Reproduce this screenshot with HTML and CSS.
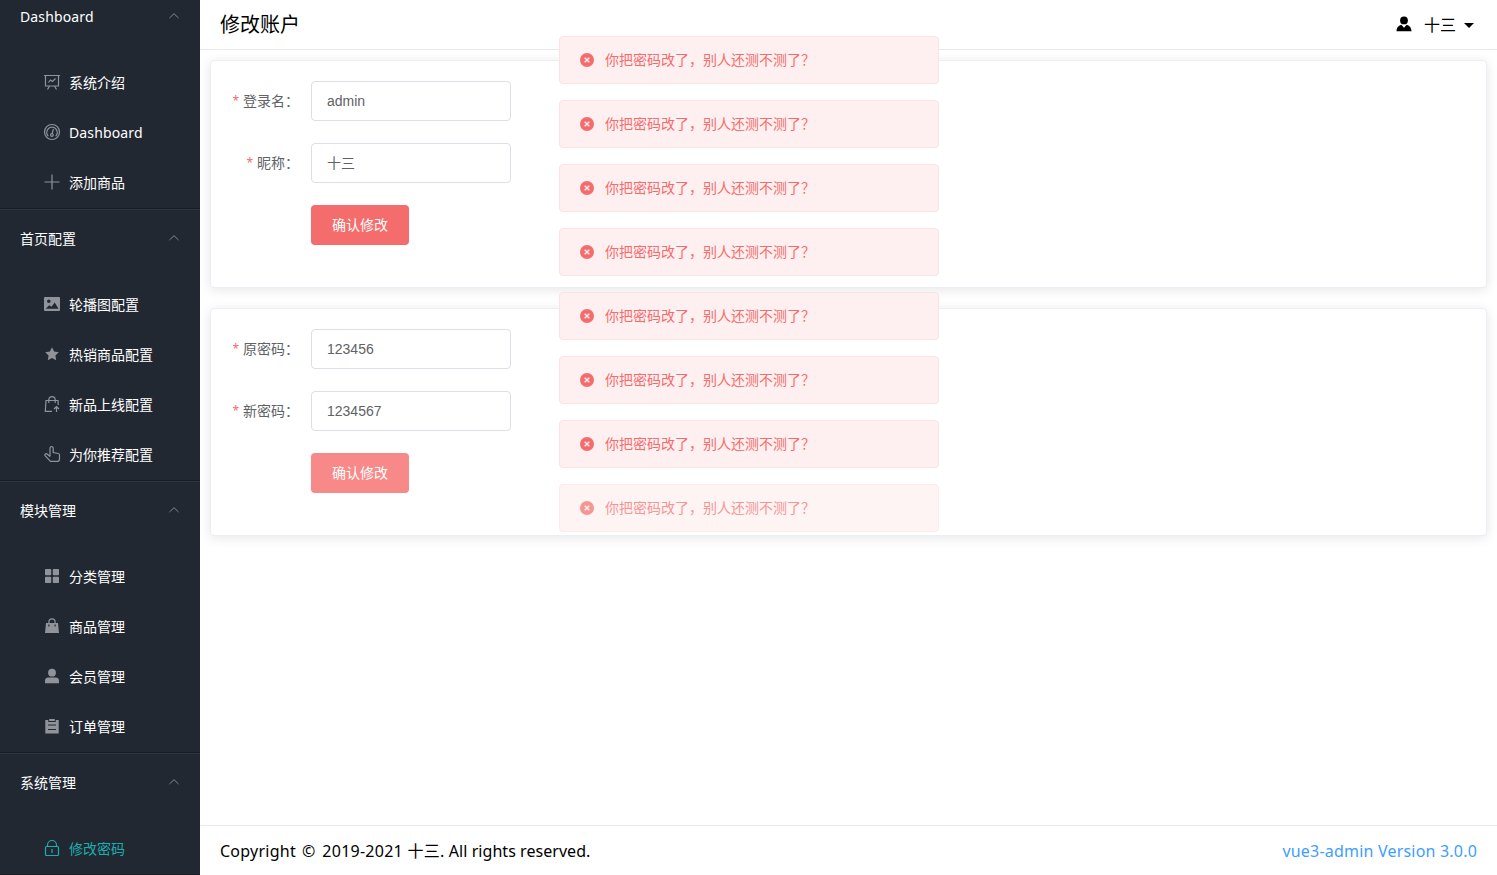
FILE: index.html
```html
<!DOCTYPE html>
<html lang="zh-CN">
<head>
<meta charset="utf-8">
<title>修改账户</title>
<link rel="stylesheet" href="styles.css">
</head>
<body>
<div class="layout">
  <aside class="sidebar">
    <section class="group group-first">
      <div class="group-title"><span class="latin">Dashboard</span><svg class="arrow" viewBox="0 0 12 12"><path d="M1.500 8 6 3.700 10.500 8"/></svg></div>
      <ul class="menu">
        <li class="item"><svg class="icon line" viewBox="0 0 16 16"><path d="M0 1.500h16M1.500 1.500v10.500h13v-10.500M5.500 12l-2 3.500M10.500 12l2 3.500M4.500 8.500l2-2.500 2 1.500 3-3"/></svg><span>系统介绍</span></li>
        <li class="item"><svg class="icon line" viewBox="0 0 16 16"><circle cx="8" cy="8" r="7.500"/><path d="M4.300 12.300a5.300 5.300 0 1 1 7.400 0M9.400 5 8.200 9.500"/><circle cx="7.900" cy="11" r="1.300"/></svg><span class="latin">Dashboard</span></li>
        <li class="item"><svg class="icon line" viewBox="0 0 16 16"><path d="M8 .5v15M.5 8h15"/></svg><span>添加商品</span></li>
      </ul>
    </section>
    <section class="group">
      <div class="group-title"><span>首页配置</span><svg class="arrow" viewBox="0 0 12 12"><path d="M1.500 8 6 3.700 10.500 8"/></svg></div>
      <ul class="menu">
        <li class="item"><svg class="icon solid" viewBox="0 0 16 16"><path fill-rule="evenodd" d="M1 1h14q1 0 1 1v12q0 1-1 1H1q-1 0-1-1V2q0-1 1-1ZM1.700 12.700h12.800L10.700 6.500 7.500 10.800 5.200 9.300ZM4.800 3.400a1.800 1.800 0 1 0 0 3.600 1.800 1.800 0 0 0 0-3.600Z"/></svg><span>轮播图配置</span></li>
        <li class="item"><svg class="icon solid" viewBox="0 0 16 16"><path d="m8 1.300 2.100 4.200 4.700.7-3.400 3.300.8 4.800L8 12.100l-4.200 2.200.8-4.800L1.200 6.200l4.700-.7Z"/></svg><span>热销商品配置</span></li>
        <li class="item"><svg class="icon line" viewBox="0 0 16 16"><path d="M8 15.300H1.300L2 4.500h12l.3 4.500M4.800 7V3.800a3.200 3.200 0 0 1 6.400 0V7M12.500 16v-5M10 13l2.500-2.500L15 13"/></svg><span>新品上线配置</span></li>
        <li class="item"><svg class="icon line" viewBox="0 0 16 16"><path d="M6 10.500V2.200a1.600 1.600 0 0 1 3.200 0v4.300l5 1q1.300.3 1.300 1.600V13q0 2.400-2 2.400H6.500L1.200 9.800q-.9-1.200.2-1.900 1-.6 2 .3L6 10.500"/></svg><span>为你推荐配置</span></li>
      </ul>
    </section>
    <section class="group">
      <div class="group-title"><span>模块管理</span><svg class="arrow" viewBox="0 0 12 12"><path d="M1.500 8 6 3.700 10.500 8"/></svg></div>
      <ul class="menu">
        <li class="item"><svg class="icon solid" viewBox="0 0 16 16"><rect x="1" y="1" width="6.200" height="6.200" rx=".7"/><rect x="8.800" y="1" width="6.200" height="6.200" rx=".7"/><rect x="1" y="8.800" width="6.200" height="6.200" rx=".7"/><rect x="8.800" y="8.800" width="6.200" height="6.200" rx=".7"/></svg><span>分类管理</span></li>
        <li class="item"><svg class="icon solid" viewBox="0 0 16 16"><path fill-rule="evenodd" d="M2 5h2.300V4a3.700 3.700 0 0 1 7.400 0v1H14l1 10H1ZM5.500 5h5V4a2.500 2.500 0 0 0-5 0ZM4.300 6.500v2h1.200v-2Zm6.200 0v2h1.200v-2Z"/></svg><span>商品管理</span></li>
        <li class="item"><svg class="icon solid" viewBox="0 0 16 16"><circle cx="8" cy="4.700" r="3.900"/><path d="M1 15.300v-2.500Q1.200 9.500 4.300 9.500h7.400q3.100 0 3.300 3.300v2.500Z"/></svg><span>会员管理</span></li>
        <li class="item"><svg class="icon solid" viewBox="0 0 16 16"><path fill-rule="evenodd" d="M1.300 2h3v2h7.400V2h3v13.500H1.300ZM4 6.500v1.100h8V6.500Zm0 4.500v1.100h8V11Z"/><path d="M5.200 1h5.600v2H5.200Z"/></svg><span>订单管理</span></li>
      </ul>
    </section>
    <section class="group">
      <div class="group-title"><span>系统管理</span><svg class="arrow" viewBox="0 0 12 12"><path d="M1.500 8 6 3.700 10.500 8"/></svg></div>
      <ul class="menu">
        <li class="item item-active"><svg class="icon line" viewBox="0 0 16 16"><rect x="1.500" y="6.500" width="13" height="9" rx="1"/><path d="M3.500 6.500V5a4.500 4.500 0 0 1 9 0v1.500M8 9v4"/></svg><span>修改密码</span></li>
      </ul>
    </section>
  </aside>
  <div class="page">
    <header class="header">
      <h1 class="title">修改账户</h1>
      <div class="user">
        <svg class="user-icon" viewBox="0 0 16 16"><circle cx="8" cy="4.400" r="3.900"/><path d="M.5 15.300c.2-3.800 1.600-5.300 4.800-6.600L8 11.700l2.700-3c3.200 1.300 4.600 2.800 4.800 6.600Z"/></svg>
        <span class="user-name">十三</span>
        <i class="caret"></i>
      </div>
    </header>
    <main class="content">
      <form class="card">
        <div class="row"><label class="label">登录名：</label><input class="input" type="text" value="admin"></div>
        <div class="row"><label class="label">昵称：</label><input class="input input-cjk" type="text" value="十三"></div>
        <button class="button" type="button">确认修改</button>
      </form>
      <form class="card">
        <div class="row"><label class="label">原密码：</label><input class="input" type="text" value="123456"></div>
        <div class="row"><label class="label">新密码：</label><input class="input" type="text" value="1234567"></div>
        <button class="button button-hover" type="button">确认修改</button>
      </form>
    </main>
    <footer class="footer">
      <span class="copyright">Copyright <span class="sign">©</span> 2019-2021 十三. <span class="rights">All rights reserved.</span></span>
      <a class="version">vue3-admin Version 3.0.0</a>
    </footer>
  </div>
</div>
<div class="messages">
  <div class="message"><svg class="message-icon" viewBox="0 0 14 14"><circle cx="7" cy="7" r="7"/><path d="m4.700 4.700 4.600 4.600m0-4.600L4.700 9.300"/></svg><span>你把密码改了，别人还测不测了？</span></div>
  <div class="message"><svg class="message-icon" viewBox="0 0 14 14"><circle cx="7" cy="7" r="7"/><path d="m4.700 4.700 4.600 4.600m0-4.600L4.700 9.300"/></svg><span>你把密码改了，别人还测不测了？</span></div>
  <div class="message"><svg class="message-icon" viewBox="0 0 14 14"><circle cx="7" cy="7" r="7"/><path d="m4.700 4.700 4.600 4.600m0-4.600L4.700 9.300"/></svg><span>你把密码改了，别人还测不测了？</span></div>
  <div class="message"><svg class="message-icon" viewBox="0 0 14 14"><circle cx="7" cy="7" r="7"/><path d="m4.700 4.700 4.600 4.600m0-4.600L4.700 9.300"/></svg><span>你把密码改了，别人还测不测了？</span></div>
  <div class="message"><svg class="message-icon" viewBox="0 0 14 14"><circle cx="7" cy="7" r="7"/><path d="m4.700 4.700 4.600 4.600m0-4.600L4.700 9.300"/></svg><span>你把密码改了，别人还测不测了？</span></div>
  <div class="message"><svg class="message-icon" viewBox="0 0 14 14"><circle cx="7" cy="7" r="7"/><path d="m4.700 4.700 4.600 4.600m0-4.600L4.700 9.300"/></svg><span>你把密码改了，别人还测不测了？</span></div>
  <div class="message"><svg class="message-icon" viewBox="0 0 14 14"><circle cx="7" cy="7" r="7"/><path d="m4.700 4.700 4.600 4.600m0-4.600L4.700 9.300"/></svg><span>你把密码改了，别人还测不测了？</span></div>
  <div class="message message-leaving"><svg class="message-icon" viewBox="0 0 14 14"><circle cx="7" cy="7" r="7"/><path d="m4.700 4.700 4.600 4.600m0-4.600L4.700 9.300"/></svg><span>你把密码改了，别人还测不测了？</span></div>
</div>
</body>
</html>
```
FILE: styles.css
```css
* { box-sizing: border-box; }
body {
  margin: 0;
  font-family: "Noto Sans", "Noto Sans CJK SC", sans-serif;
  font-size: 14px;
  color: #000;
  background: #fff;
}
.layout { display: flex; height: 100vh; overflow: hidden; }

.sidebar { width: 200px; flex: none; height: 100%; overflow: hidden; background: #222832; color: #fff; }
.group { border-top: 1px solid #2f353f; border-bottom: 1px solid #191d26; }
.group-first { border-top: 0; }
.group-title { display: flex; align-items: center; justify-content: space-between; height: 56px; padding: 0 20px; }
.group-first .group-title { height: 44px; padding-bottom: 12px; }
.arrow { width: 12px; height: 12px; fill: none; stroke: #82868d; stroke-width: 1; }
.menu { list-style: none; margin: 0; padding: 14px 0 0; }
.item { display: flex; align-items: center; gap: 9px; height: 50px; padding: 0 0 2px 44px; }
.latin { letter-spacing: .13px; }
.icon { width: 16px; height: 16px; flex: none; color: #909399; }
.line { fill: none; stroke: currentColor; stroke-width: 1.2; overflow: visible; }
.solid { fill: currentColor; }
.item-active, .item-active .icon { color: #1baeae; }

.page { flex: 1; display: flex; flex-direction: column; min-width: 0; }
.header { display: flex; align-items: center; justify-content: space-between; height: 50px; padding: 0 23px 0 20px; border-bottom: 1px solid #e9e9e9; }
.title { margin: 0; padding-bottom: 2px; font-size: 20px; font-weight: 400; }
.user { display: flex; align-items: center; font-size: 16px; }
.user-icon { width: 16px; height: 16px; margin: -1px 12px 0 0; }
.user-name { margin-right: 8px; padding-bottom: 1px; }
.caret { margin-top: 1px; border: 5px solid transparent; border-top: 5px solid #000; border-bottom: 0; }

.content { flex: 1; display: flex; flex-direction: column; gap: 20px; padding: 10px; overflow: hidden; }
.card { height: 228px; flex: none; padding: 20px; border: 1px solid #ebeef5; border-radius: 4px; background: #fff; box-shadow: 0 2px 12px rgba(0, 0, 0, .1); }
.row { display: flex; height: 40px; margin-bottom: 22px; }
.label { display: flex; justify-content: flex-end; width: 80px; line-height: 40px; padding-right: 12px; color: #606266; white-space: nowrap; }
.label::before { content: "*"; color: #f56c6c; margin-right: 4px; font-size: 12px; line-height: 39px; }
.input { width: 200px; height: 40px; padding: 0 15px; border: 1px solid #dcdfe6; border-radius: 4px; color: #606266; background: #fff; font-family: "Liberation Sans", "Noto Sans CJK SC", sans-serif; font-size: 14px; outline: none; }
.input-cjk { padding-bottom: 2px; }
.button { display: block; width: 98px; height: 40px; margin-left: 80px; padding: 0 0 2px; border: 0; border-radius: 4px; background: #f56c6c; color: #fff; font: inherit; }
.button-hover { background: #f78989; }

.footer { display: flex; align-items: center; justify-content: space-between; height: 50px; padding: 0 20px; border-top: 1px solid #e9e9e9; font-size: 16px; }
.copyright { padding-bottom: 2px; letter-spacing: .25px; }
.sign { margin: 0 2.500px 0 1.500px; }
.rights { letter-spacing: .05px; }
.version { color: #409eff; letter-spacing: .2px; }

/* Toast stack floats above the page */
.messages { position: absolute; top: 36px; left: 559px; width: 380px; display: flex; flex-direction: column; gap: 16px; }
.message { display: flex; align-items: center; gap: 11px; height: 48px; padding-left: 20px; border: 1px solid #fde2e2; border-radius: 4px; background: #fef0f0; color: #f56c6c; }
.message span { padding-bottom: 2px; }
.message-icon { width: 14px; height: 14px; fill: #f56c6c; }
.message-icon path { stroke: #fef0f0; stroke-width: 1.4; }
.message-leaving { opacity: .72; }
```
